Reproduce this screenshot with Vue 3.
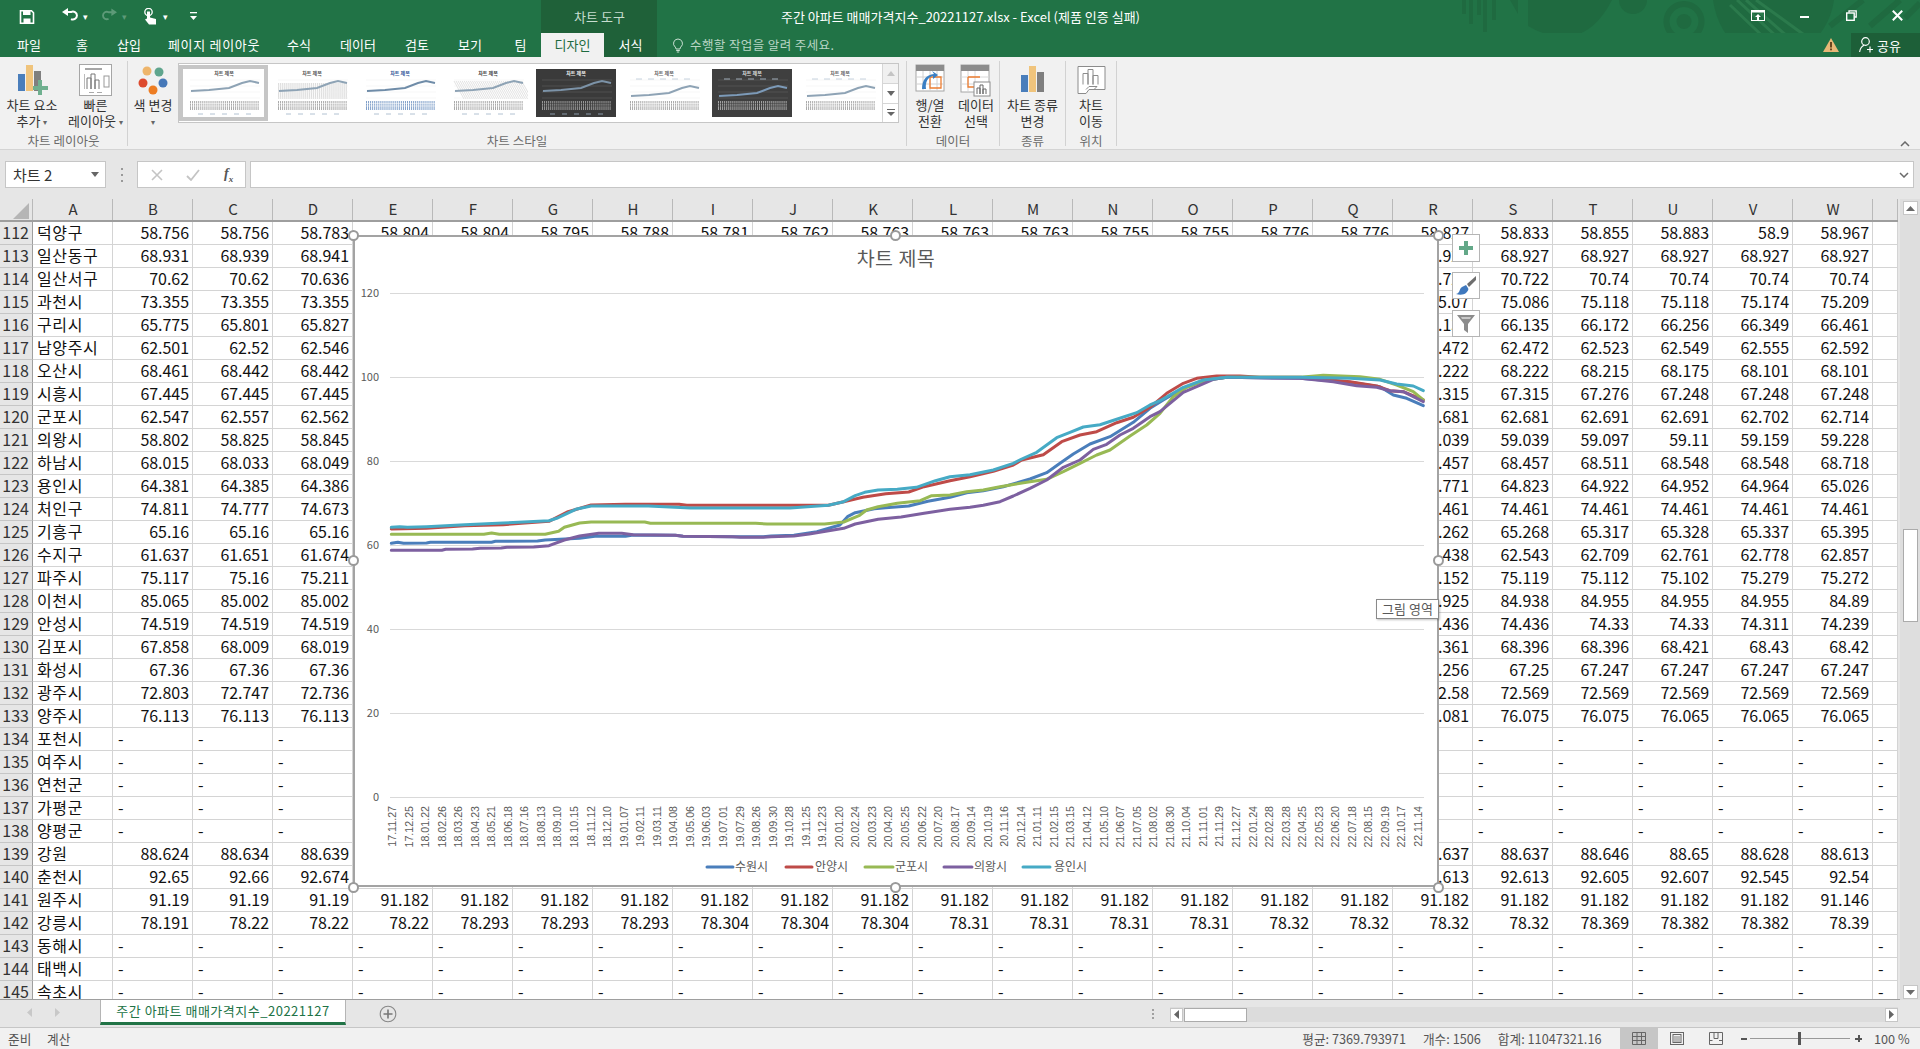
<script setup>
const D = [
  [112,'덕양구',['58.756','58.756','58.783','58.804','58.804','58.795','58.788','58.781','58.762','58.763','58.763','58.763','58.755','58.755','58.776','58.776','58.827','58.833','58.855','58.883','58.9','58.967']],
  [113,'일산동구',['68.931','68.939','68.941',14,'68.927','68.927','68.927','68.927','68.927','68.927']],
  [114,'일산서구',['70.62','70.62','70.636',14,'70.722','70.722','70.74','70.74','70.74','70.74']],
  [115,'과천시',['73.355','73.355','73.355',14,'75.07','75.086','75.118','75.118','75.174','75.209']],
  [116,'구리시',['65.775','65.801','65.827',14,'66.135','66.135','66.172','66.256','66.349','66.461']],
  [117,'남양주시',['62.501','62.52','62.546',14,'62.472','62.472','62.523','62.549','62.555','62.592']],
  [118,'오산시',['68.461','68.442','68.442',14,'68.222','68.222','68.215','68.175','68.101','68.101']],
  [119,'시흥시',['67.445','67.445','67.445',14,'67.315','67.315','67.276','67.248','67.248','67.248']],
  [120,'군포시',['62.547','62.557','62.562',14,'62.681','62.681','62.691','62.691','62.702','62.714']],
  [121,'의왕시',['58.802','58.825','58.845',14,'59.039','59.039','59.097','59.11','59.159','59.228']],
  [122,'하남시',['68.015','68.033','68.049',14,'68.457','68.457','68.511','68.548','68.548','68.718']],
  [123,'용인시',['64.381','64.385','64.386',14,'64.771','64.823','64.922','64.952','64.964','65.026']],
  [124,'처인구',['74.811','74.777','74.673',14,'74.461','74.461','74.461','74.461','74.461','74.461']],
  [125,'기흥구',['65.16','65.16','65.16',14,'65.262','65.268','65.317','65.328','65.337','65.395']],
  [126,'수지구',['61.637','61.651','61.674',14,'62.438','62.543','62.709','62.761','62.778','62.857']],
  [127,'파주시',['75.117','75.16','75.211',14,'75.152','75.119','75.112','75.102','75.279','75.272']],
  [128,'이천시',['85.065','85.002','85.002',14,'84.925','84.938','84.955','84.955','84.955','84.89']],
  [129,'안성시',['74.519','74.519','74.519',14,'74.436','74.436','74.33','74.33','74.311','74.239']],
  [130,'김포시',['67.858','68.009','68.019',14,'68.361','68.396','68.396','68.421','68.43','68.42']],
  [131,'화성시',['67.36','67.36','67.36',14,'67.256','67.25','67.247','67.247','67.247','67.247']],
  [132,'광주시',['72.803','72.747','72.736',14,'72.58','72.569','72.569','72.569','72.569','72.569']],
  [133,'양주시',['76.113','76.113','76.113',14,'76.081','76.075','76.075','76.065','76.065','76.065']],
  [134,'포천시'],[135,'여주시'],[136,'연천군'],[137,'가평군'],[138,'양평군'],
  [139,'강원',['88.624','88.634','88.639',14,'88.637','88.637','88.646','88.65','88.628','88.613']],
  [140,'춘천시',['92.65','92.66','92.674',14,'92.613','92.613','92.605','92.607','92.545','92.54']],
  [141,'원주시',['91.19','91.19','91.19','91.182','91.182','91.182','91.182','91.182','91.182','91.182','91.182','91.182','91.182','91.182','91.182','91.182','91.182','91.182','91.182','91.182','91.182','91.146']],
  [142,'강릉시',['78.191','78.22','78.22','78.22','78.293','78.293','78.293','78.304','78.304','78.304','78.31','78.31','78.31','78.31','78.32','78.32','78.32','78.32','78.369','78.382','78.382','78.39']],
  [143,'동해시'],[144,'태백시'],[145,'속초시'],
]
const cols = 'ABCDEFGHIJKLMNOPQRSTUVW'.split('').concat([''])
const rows = D.map(([n, name, vals]) => {
  let cells
  if (!vals) cells = Array.from({ length: 23 }, () => ({ t: '-', dash: true }))
  else {
    const out = []
    for (const v of vals) {
      if (typeof v === 'number') { for (let i = 0; i < 13; i++) out.push({ t: '' }) }
      else out.push({ t: v })
    }
    out.push({ t: '' })
    cells = out
  }
  return { n, name, cells }
})

const dates = '17.11.27 17.12.25 18.01.22 18.02.26 18.03.26 18.04.23 18.05.21 18.06.18 18.07.16 18.08.13 18.09.10 18.10.15 18.11.12 18.12.10 19.01.07 19.02.11 19.03.11 19.04.08 19.05.06 19.06.03 19.07.01 19.07.29 19.08.26 19.09.30 19.10.28 19.11.25 19.12.23 20.01.20 20.02.24 20.03.23 20.04.20 20.05.25 20.06.22 20.07.20 20.08.17 20.09.14 20.10.19 20.11.16 20.12.14 21.01.11 21.02.15 21.03.15 21.04.12 21.05.10 21.06.07 21.07.05 21.08.02 21.08.30 21.10.04 21.11.01 21.11.29 21.12.27 22.01.24 22.02.28 22.03.28 22.04.25 22.05.23 22.06.20 22.07.18 22.08.15 22.09.19 22.10.17 22.11.14'.split(' ')
const dateLabels = dates.map((t, i) => ({ t, x: 396 + i * (1026 / 62) }))
const yAxis = [120, 100, 80, 60, 40, 20, 0].map((v) => ({ v, y: 797 - v * 4.2 }))

// first list: crop measured at x 350 + zx/2.613, second list: x 950 + zx/3; y 350 + zy/3
const mk = (color, a, b) => {
  const p = a.map(([x, y]) => [350 + x / 2.613, 350 + y / 3]).concat(b.map(([x, y]) => [950 + x / 3, 350 + y / 3]))
  return { color, pts: p.map(([x, y]) => x.toFixed(1) + ',' + y.toFixed(1)).join(' ') }
}
const series = [
  mk('#4a7ebb',
    [[108,580],[125,577],[140,580],[200,579],[210,577],[370,577],[380,574],[490,573],[510,570],[600,565],[640,559],[720,559],[740,555],[850,556],[870,559],[1000,560],[1080,560],[1100,558],[1160,556],[1220,545],[1280,525],[1300,500],[1320,488],[1370,476],[1400,473],[1460,468],[1510,454]],
    [[0,442],[50,428],[100,422],[160,410],[240,387],[290,368],[330,340],[370,312],[420,282],[480,260],[550,217],[600,175],[640,150],[700,115],[760,92],[830,82],[1050,85],[1200,97],[1290,110],[1330,135],[1370,145],[1420,167]]),
  mk('#be4b48',
    [[108,537],[200,535],[300,527],[400,524],[520,514],[570,485],[630,465],[720,463],[860,463],[880,466],[1250,466],[1290,455],[1340,442],[1400,431],[1460,426],[1500,410]],
    [[0,392],[60,380],[130,364],[190,345],[215,330],[280,314],[335,275],[390,255],[440,245],[500,218],[550,202],[600,172],[650,130],[700,100],[740,85],[800,78],[870,78],[930,82],[1050,82],[1200,95],[1280,108],[1320,122],[1360,125],[1420,150]]),
  mk('#98b954',
    [[108,553],[350,553],[370,549],[390,553],[510,553],[545,544],[560,532],[600,519],[630,516],[770,516],[785,520],[1060,520],[1090,522],[1240,522],[1290,516],[1330,497],[1350,480],[1380,470],[1430,460],[1490,452],[1520,437]],
    [[0,435],[50,425],[100,420],[150,410],[230,397],[290,388],[340,365],[390,340],[440,315],[480,300],[540,258],[590,225],[630,190],[670,140],[710,112],[770,90],[830,82],[1050,82],[1120,76],[1230,80],[1290,88],[1340,105],[1390,125],[1420,150]]),
  mk('#7d60a0',
    [[108,601],[240,601],[250,598],[320,597],[340,595],[395,594],[410,592],[480,591],[520,587],[560,570],[600,558],[650,550],[710,550],[740,554],[850,556],[870,559],[1000,560],[1020,562],[1080,562],[1100,560],[1160,558],[1200,552],[1290,535],[1320,522],[1380,508],[1440,501],[1500,490]],
    [[0,478],[60,472],[100,466],[150,455],[190,438],[240,415],[290,390],[340,352],[390,330],[430,298],[470,283],[510,255],[550,235],[600,200],[630,185],[700,127],[740,110],[790,88],[830,82],[1050,85],[1150,95],[1220,107],[1280,112],[1320,122],[1360,125],[1420,155]]),
  mk('#46aac5',
    [[108,532],[130,530],[150,532],[200,530],[300,524],[400,519],[520,512],[540,505],[590,478],[630,468],[780,468],[890,474],[1150,474],[1250,466],[1290,455],[1320,437],[1345,427],[1380,420],[1430,418],[1480,412],[1530,392]],
    [[0,380],[60,374],[130,360],[190,340],[215,327],[260,307],[320,263],[360,247],[400,231],[450,224],[500,208],[560,188],[600,165],[630,152],[700,112],[760,90],[830,82],[1050,82],[1200,85],[1290,90],[1340,102],[1390,108],[1420,122]]),
]
const legend = [
  { name: '수원시', color: '#4a7ebb', x1: 707, x2: 733, tx: 735 },
  { name: '안양시', color: '#be4b48', x1: 786, x2: 812, tx: 815 },
  { name: '군포시', color: '#98b954', x1: 865, x2: 893, tx: 895 },
  { name: '의왕시', color: '#7d60a0', x1: 944, x2: 972, tx: 974 },
  { name: '용인시', color: '#46aac5', x1: 1023, x2: 1050, tx: 1054 },
]
const handles = [[353,235],[895,235],[1438,235],[353,560],[1438,560],[353,887],[895,887],[1438,887]]

const tabs = [
  { t: '파일', w: 58 }, { t: '홈', w: 48 }, { t: '삽입', w: 46 }, { t: '페이지 레이아웃', w: 124, wide: true },
  { t: '수식', w: 46 }, { t: '데이터', w: 72 }, { t: '검토', w: 46 }, { t: '보기', w: 60 }, { t: '팀', w: 41 },
]
const thumbs = [
  { bg: '#fff', title: '#555', tick: '#aaa', line: '#8ea3b5', kind: 'plain', sel: true },
  { bg: '#fff', title: '#555', tick: '#aaa', line: '#8ea3b5', kind: 'bars' },
  { bg: '#fff', title: '#2f5597', tick: '#7f9fc9', line: '#6f8ca8', kind: 'plain' },
  { bg: '#fff', title: '#444', tick: '#aaa', line: '#8ea3b5', kind: 'hatch' },
  { bg: '#3a3a3a', title: '#eee', tick: '#999', line: '#7c93a8', kind: 'plain' },
  { bg: '#fff', title: '#666', tick: '#aaa', line: '#8ea3b5', kind: 'top' },
  { bg: '#3f3f3f', title: '#ddd', tick: '#a8a8a8', line: '#7c9ab8', kind: 'top' },
  { bg: '#fff', title: '#666', tick: '#aaa', line: '#8ea3b5', kind: 'top' },
]
const thumbTicks = Array.from({ length: 34 }, (_, i) => 6 + i * 2.05)
</script>

<template>
  <div class="app">
    <header class="titlebar">
      <svg class="pattern" viewBox="0 0 520 57" width="520" height="57">
        <g fill="#1f6a40">
          <rect x="62" y="0" width="4" height="14"/><rect x="69" y="0" width="4" height="24"/><rect x="77" y="0" width="4" height="15"/><rect x="83" y="0" width="4" height="32"/><rect x="92" y="0" width="4" height="20"/>
          <path d="M110 0 L118 14 L118 0Z"/>
          <path d="M128 0 L128 26 Q150 39 170 36 Q195 33 212 0Z"/>
          <circle cx="233" cy="0" r="14"/>
          <path fill-rule="evenodd" d="M284 1a20.500 20.500 0 1 0 .01 0ZM284 7a14.500 14.500 0 1 1-.01 0Z"/>
          <circle cx="284" cy="21.500" r="7.500"/>
          <path d="M313 0 Q318 34 344 52 L402 52 Q430 30 434 0Z"/>
        </g>
        <g stroke="#2b7a4c" stroke-width="3" fill="none">
          <path d="M330 5 L375 48M337 0 L389 48M346 0 L396 44M356 0 L407 37"/>
          <path d="M430 26 L463 0M470 26 L500 0M505 18 L520 3" stroke="#1f6a40" stroke-width="6"/>
        </g>
      </svg>
      <div class="qat">
        <svg class="q-save" width="16" height="14" viewBox="0 0 16 14"><path d="M1.500 .8h11l2 2v10.400h-13Z" fill="none" stroke="#fff" stroke-width="1.600"/><rect x="4" y="1" width="7.500" height="4" fill="#fff"/><rect x="4.500" y="8.500" width="7" height="4.500" fill="#fff"/></svg>
        <svg class="q-undo" width="16" height="15" viewBox="0 0 16 15"><path d="M5 7h5a4 4 0 1 1 0 7" fill="none" stroke="#fff" stroke-width="2" transform="translate(-1 -3)"/><path d="M6 0v8L0 4Z" fill="#fff" transform="translate(0 0)"/></svg>
        <span class="q-drop">▾</span>
        <svg class="q-redo" width="15" height="15" viewBox="0 0 16 15"><g transform="matrix(-1 0 0 1 16 0)"><path d="M5 7h5a4 4 0 1 1 0 7" fill="none" stroke="#5d9a78" stroke-width="2" transform="translate(-1 -3)"/><path d="M6 0v8L0 4Z" fill="#5d9a78"/></g></svg>
        <span class="q-drop dim">▾</span>
        <svg class="q-touch" width="14" height="17" viewBox="0 0 14 17"><circle cx="4.500" cy="4" r="3.700" fill="none" stroke="#fff" stroke-width="1.300"/><path d="M3 3.500h3v6l6 1.500v5.500H5L1 11.500l2-1Z" fill="#fff"/></svg>
        <span class="q-drop">▾</span>
        <svg class="q-more" width="7" height="9" viewBox="0 0 7 9"><rect x="0" y="0" width="7" height="1.300" fill="#fff"/><path d="M0 4h7L3.500 8Z" fill="#fff"/></svg>
      </div>
      <div class="tool-band">차트 도구</div>
      <div class="doc-title">주간 아파트 매매가격지수_20221127.xlsx - Excel (제품 인증 실패)</div>
      <div class="win">
        <svg class="w-opt" width="14" height="11" viewBox="0 0 14 11"><rect x=".5" y=".5" width="13" height="10" fill="none" stroke="#fff"/><rect x=".5" y=".5" width="13" height="2" fill="#fff"/><path d="M7 4l3 3H8v3H6V7H4Z" fill="#fff"/></svg>
        <span class="w-min"></span>
        <svg class="w-res" width="11" height="11" viewBox="0 0 11 11"><path d="M3 2.500V.8h7.200V7H8.500" fill="none" stroke="#fff" stroke-width="1.300"/><rect x=".7" y="3" width="7.500" height="7.300" fill="none" stroke="#fff" stroke-width="1.400"/></svg>
        <svg class="w-close" width="11" height="11" viewBox="0 0 11 11"><path d="M.8 .8L10.200 10.200M10.200 .8L.8 10.200" stroke="#fff" stroke-width="2"/></svg>
      </div>
    </header>

    <nav class="tabs">
      <span v-for="t in tabs" :key="t.t" class="tab" :class="{ wide: t.wide }" :style="{ width: t.w + 'px' }">{{ t.t }}</span>
      <span class="tab ctx active">디자인</span>
      <span class="tab ctx">서식</span>
      <svg class="bulb" width="12" height="15" viewBox="0 0 12 15"><path d="M6 1a4.500 4.500 0 0 0-2.800 8c.6.600.8 1.200.8 2h4c0-.8.2-1.400.8-2A4.500 4.500 0 0 0 6 1Z" fill="none" stroke="#c9e0d2" stroke-width="1"/><path d="M4.200 12.500h3.600M4.800 14h2.400" stroke="#c9e0d2" stroke-width="1"/></svg>
      <span class="tell">수행할 작업을 알려 주세요.</span>
      <svg class="warn" width="16" height="14" viewBox="0 0 16 14"><path d="M8 0L16 14H0Z" fill="#e8b877"/><rect x="7.100" y="4" width="1.800" height="5.500" fill="#5b3a16"/><rect x="7.100" y="10.500" width="1.800" height="1.800" fill="#5b3a16"/></svg>
      <span class="share">
        <svg width="15" height="16" viewBox="0 0 15 16"><circle cx="6.500" cy="4.500" r="3.800" fill="none" stroke="#fff" stroke-width="1.200"/><path d="M.6 15c.5-3.500 2.500-6 4.500-6.800" fill="none" stroke="#fff" stroke-width="1.200"/><path d="M11 9.500v6M8 12.500h6" stroke="#fff" stroke-width="1.200"/></svg>
        공유
      </span>
    </nav>

    <section class="ribbon">
      <div class="group g1">
        <div class="g-body">
          <div class="rbtn w64">
            <svg class="ic" width="32" height="32" viewBox="0 0 32 32"><rect x="2" y="10" width="7" height="17" fill="#4a7ebb"/><rect x="10" y="1" width="7" height="26" fill="#f0c47c"/><rect x="18" y="7" width="7" height="20" fill="#7f7f7f"/><path d="M22 16h4v6h6v4h-6v5h-4v-5h-5v-4h5Z" fill="#6fb08f"/></svg>
            <span class="l1">차트 요소</span><span class="l2">추가<i class="car">▾</i></span>
          </div>
          <div class="rbtn w62">
            <svg class="ic" width="33" height="32" viewBox="0 0 33 32"><rect x=".5" y=".5" width="32" height="31" fill="#fff" stroke="#a6a6a6"/><rect x="6" y="4" width="17" height="2" fill="#a6a6a6"/><rect x="5" y="10" width="1" height="15" fill="#bbb"/><path d="M8 25V14h4v11M12 25V10h4v15M16 25V16h4v9" fill="#fff" stroke="#777"/><rect x="25" y="12" width="5" height="11" fill="#fff" stroke="#999"/><rect x="10" y="28" width="5" height="1" fill="#aaa"/><rect x="18" y="28" width="5" height="1" fill="#aaa"/></svg>
            <span class="l1">빠른</span><span class="l2">레이아웃<i class="car">▾</i></span>
          </div>
        </div>
        <div class="g-label">차트 레이아웃</div>
      </div>
      <div class="group g2">
        <div class="g-body">
          <div class="rbtn w50">
            <svg class="ic" width="32" height="32" viewBox="0 0 32 32"><circle cx="10" cy="7" r="4.500" fill="#eeb56b"/><circle cx="22" cy="8" r="4.500" fill="#5fa58d"/><circle cx="6" cy="19" r="4.500" fill="#dd4a2e"/><circle cx="26" cy="19" r="4.500" fill="#4678b8"/><circle cx="16" cy="26" r="4.500" fill="#ed7d23"/></svg>
            <span class="l1">색 변경</span><span class="l2"><i class="car solo">▾</i></span>
          </div>
          <div class="gallery">
            <div v-for="(th, i) in thumbs" :key="i" class="thumb" :class="{ sel: th.sel }">
              <svg width="80" height="48" viewBox="0 0 80 48">
                <rect width="80" height="48" :fill="th.bg"/>
                <g v-if="th.kind === 'bars'"><rect v-for="x in thumbTicks" :key="x" :x="x" y="14" width="1.200" height="16" fill="#dedede"/></g>
                <g v-if="th.kind === 'hatch'" stroke="#cfcfcf" stroke-width=".6"><path v-for="x in thumbTicks" :key="x" :d="`M${x} 12L${x + 10} 30`"/></g>
                <g :stroke="th.bg === '#fff' ? '#ececec' : '#666'" stroke-width=".5"><path d="M6 11H76M6 17H76M6 23H76M6 29H76"/></g>
                <text x="40" y="6" class="t-title" :fill="th.title" text-anchor="middle">차트 제목</text>
                <g v-if="th.kind === 'top'" stroke="#b8c6d6" stroke-width=".8"><path d="M12 10h6M24 10h6M36 10h6M48 10h6M60 10h6"/></g>
                <polyline :points="th.kind === 'top' ? '7,27 25,26 45,24 58,19 66,17 75,19' : '7,22 25,21 45,19 58,14 66,12 75,14'" fill="none" :stroke="th.line" stroke-width="2"/>
                <g><rect v-for="x in thumbTicks" :key="x" :x="x" y="32" width="1" height="9" :fill="th.tick"/></g>
                <g :stroke="th.bg === '#fff' ? '#fff' : th.bg" stroke-width=".5"><path d="M5 34.500H76M5 37H76"/></g>
                <g v-if="th.kind !== 'top'" stroke="#9fb2c6" stroke-width=".8"><path d="M14 45h5M26 45h5M38 45h5M50 45h5M62 45h5"/></g>
              </svg>
            </div>
            <div class="g-scroll">
              <span class="gs up"><svg width="8" height="5" viewBox="0 0 8 5"><path d="M4 0l4 5H0Z" fill="#c4c4c4"/></svg></span>
              <span class="gs"><svg width="8" height="5" viewBox="0 0 8 5"><path d="M4 5l4-5H0Z" fill="#666"/></svg></span>
              <span class="gs"><svg width="8" height="8" viewBox="0 0 8 8"><rect width="8" height="1" fill="#666"/><path d="M4 7l4-4H0Z" fill="#666"/></svg></span>
            </div>
          </div>
        </div>
        <div class="g-label">차트 스타일</div>
      </div>
      <div class="group g3">
        <div class="g-body">
          <div class="rbtn w46">
            <svg class="ic" width="30" height="32" viewBox="0 0 30 32"><rect x="1" y="1" width="28" height="26" fill="#fff" stroke="#a6a6a6"/><rect x="1" y="1" width="28" height="6" fill="#8c8c8c"/><path d="M1 13h28M1 20h28M8 7v20M15 7v20M22 7v20" stroke="#d0d0d0"/><path d="M15 13h11v11H15Z" fill="none" stroke="#ed7d31" stroke-width="1.300"/><path d="M7 25C7 16 11 11 19 10l-2-3 6 4-5 4 0-3C13 13 10 18 11 25Z" fill="#3a7fc4"/></svg>
            <span class="l1">행/열</span><span class="l2">전환</span>
          </div>
          <div class="rbtn w46">
            <svg class="ic" width="32" height="32" viewBox="0 0 32 32"><rect x="1" y="1" width="28" height="27" fill="#fff" stroke="#a6a6a6"/><rect x="1" y="1" width="28" height="6" fill="#8c8c8c"/><path d="M1 13h28M1 20h28M8 7v20M15 7v20" stroke="#d8d8d8"/><path d="M8 13h12M8 13v10h8" fill="none" stroke="#ed7d31" stroke-width="1.300"/><rect x="14" y="18" width="16" height="14" fill="#fff" stroke="#8c8c8c"/><path d="M17 30v-6h3v6M20 30V21h3v9M23 30v-5h3v5" fill="#fff" stroke="#666"/></svg>
            <span class="l1">데이터</span><span class="l2">선택</span>
          </div>
        </div>
        <div class="g-label">데이터</div>
      </div>
      <div class="group g4">
        <div class="g-body">
          <div class="rbtn w66">
            <svg class="ic" width="24" height="28" viewBox="0 0 24 28"><rect x="0" y="9" width="7" height="17" fill="#4a7ebb"/><rect x="8" y="0" width="7" height="26" fill="#f0c47c"/><rect x="16" y="6" width="7" height="20" fill="#7f7f7f"/></svg>
            <span class="l1">차트 종류</span><span class="l2">변경</span>
          </div>
        </div>
        <div class="g-label">종류</div>
      </div>
      <div class="group g5">
        <div class="g-body">
          <div class="rbtn w50">
            <svg class="ic" width="29" height="29" viewBox="0 0 29 29"><path d="M1 1h27v23H12l-3 4H1Z" fill="#fff" stroke="#8c8c8c"/><path d="M9 24l3-3h8l-3 3" fill="none" stroke="#8c8c8c"/><path d="M6 19V8h5v11M11 19V4h5v15M16 19V10h5v9" fill="#fff" stroke="#8c8c8c"/></svg>
            <span class="l1">차트</span><span class="l2">이동</span>
          </div>
        </div>
        <div class="g-label">위치</div>
      </div>
      <svg class="collapse" width="10" height="6" viewBox="0 0 10 6"><path d="M1 5l4-4 4 4" fill="none" stroke="#6a6a6a" stroke-width="1.500"/></svg>
    </section>

    <section class="fbar">
      <div class="namebox"><span>차트 2</span><svg width="8" height="5" viewBox="0 0 8 5"><path d="M0 0h8L4 5Z" fill="#666"/></svg></div>
      <div class="fdots"><i></i><i></i><i></i></div>
      <div class="fbtns">
        <svg width="12" height="12" viewBox="0 0 12 12"><path d="M1 1l10 10M11 1L1 11" stroke="#c4c4c4" stroke-width="1.600"/></svg>
        <svg width="14" height="12" viewBox="0 0 14 12"><path d="M1 7l4 4 8-10" fill="none" stroke="#c4c4c4" stroke-width="1.800"/></svg>
        <span class="fx">f<sub>x</sub></span>
      </div>
      <div class="finput"><svg width="10" height="6" viewBox="0 0 10 6"><path d="M1 1l4 4 4-4" fill="none" stroke="#6a6a6a" stroke-width="1.500"/></svg></div>
    </section>

    <section class="sheet-wrap">
      <div class="sheet">
        <div class="head">
          <div class="corner"><svg width="16" height="16" viewBox="0 0 16 16"><path d="M16 0v16H0Z" fill="#b5b5b5"/></svg></div>
          <div v-for="c in cols" :key="c" class="hcell">{{ c }}</div>
        </div>
        <div v-for="r in rows" :key="r.n" class="row">
          <div class="rn">{{ r.n }}</div>
          <div class="cell name">{{ r.name }}</div>
          <div v-for="(c, i) in r.cells" :key="i" class="cell" :class="{ dash: c.dash }">{{ c.t }}</div>
        </div>

        <div class="chart">
          <svg class="chart-svg" width="1086" height="652" viewBox="353 235 1086 652">
            <text x="896" y="266" class="c-title" text-anchor="middle">차트 제목</text>
            <g v-for="y in yAxis" :key="y.v">
              <line x1="390" x2="1424" :y1="y.y + .5" :y2="y.y + .5" stroke="#d9d9d9" stroke-width="1"/>
              <text x="379" :y="y.y + 4" class="c-axis" text-anchor="end">{{ y.v }}</text>
            </g>
            <polyline v-for="s in series" :key="s.color" :points="s.pts" fill="none" :stroke="s.color" stroke-width="3" stroke-linejoin="round" stroke-linecap="round"/>
            <text v-for="d in dateLabels" :key="d.t" :x="d.x" y="806" :transform="`rotate(-90 ${d.x} 806)`" class="c-date" text-anchor="end">{{ d.t }}</text>
            <g v-for="l in legend" :key="l.name">
              <line :x1="l.x1" :x2="l.x2" y1="867" y2="867" :stroke="l.color" stroke-width="3" stroke-linecap="round"/>
              <text :x="l.tx" y="871" class="c-leg">{{ l.name }}</text>
            </g>
          </svg>
          <i v-for="(h, i) in handles" :key="i" class="handle" :style="{ left: (h[0] - 353) + 'px', top: (h[1] - 235) + 'px' }"></i>
        </div>

        <div class="cbtn b1"><svg width="16" height="16" viewBox="0 0 16 16"><path d="M6 1h4v5h5v4h-5v5H6v-5H1V6h5Z" fill="#63a888"/></svg></div>
        <div class="cbtn b2"><svg width="22" height="22" viewBox="0 0 22 22"><path d="M21 1L12 9l2 3 7-7Z" fill="#6e6e6e"/><path d="M11 10l-4 2c-2 1-2 3-3 5-1 1-2 2-3 2 3 1 8 1 10-1 2-2 3-4 2-5Z" fill="#3f78bd"/></svg></div>
        <div class="cbtn b3"><svg width="20" height="20" viewBox="0 0 20 20"><path d="M1 1h18l-7 9v9l-4-3v-6Z" fill="#8c8c8c"/><path d="M5 3h10l-1 2H6Z" fill="#c8c8c8"/></svg></div>
        <div class="tip">그림 영역</div>
      </div>
      <aside class="vscroll">
        <span class="vbtn"><svg width="9" height="5" viewBox="0 0 9 5"><path d="M4.500 0L9 5H0Z" fill="#6a6a6a"/></svg></span>
        <span class="vthumb"></span>
        <span class="vbtn last"><svg width="9" height="5" viewBox="0 0 9 5"><path d="M4.500 5L9 0H0Z" fill="#6a6a6a"/></svg></span>
      </aside>
    </section>

    <section class="sheetbar">
      <div class="nav"><svg width="5" height="9" viewBox="0 0 5 9"><path d="M5 0v9L0 4.500Z" fill="#c8c8c8"/></svg><svg width="5" height="9" viewBox="0 0 5 9"><path d="M0 0v9l5-4.500Z" fill="#c8c8c8"/></svg></div>
      <div class="stab">주간 아파트 매매가격지수_20221127</div>
      <svg class="addtab" width="18" height="18" viewBox="0 0 18 18"><circle cx="9" cy="9" r="7.800" fill="none" stroke="#888" stroke-width="1.100"/><path d="M9 4.500v9M4.500 9h9" stroke="#777" stroke-width="1.600"/></svg>
      <div class="split"><i></i><i></i><i></i></div>
      <div class="hscroll">
        <span class="hbtn"><svg width="5" height="9" viewBox="0 0 5 9"><path d="M5 0v9L0 4.500Z" fill="#666"/></svg></span>
        <span class="hthumb"></span>
        <span class="hbtn end"><svg width="5" height="9" viewBox="0 0 5 9"><path d="M0 0v9l5-4.500Z" fill="#666"/></svg></span>
      </div>
    </section>

    <footer class="status">
      <span class="st1">준비</span>
      <span class="st2">계산</span>
      <span class="st3">평균: 7369.793971</span>
      <span class="st4">개수: 1506</span>
      <span class="st5">합계: 11047321.16</span>
      <span class="view on"><svg width="14" height="13" viewBox="0 0 14 13"><path d="M.5 .5h13v12H.5ZM.5 4.500h13M.5 8.500h13M5 .5v12M9.500 .5v12" fill="none" stroke="#666"/></svg></span>
      <span class="view"><svg width="14" height="13" viewBox="0 0 14 13"><rect x=".5" y=".5" width="13" height="12" fill="none" stroke="#666"/><rect x="3" y="2.500" width="8" height="8" fill="none" stroke="#666"/><path d="M4 5h6M4 7h6M4 9h6" stroke="#666" stroke-width=".8"/></svg></span>
      <span class="view"><svg width="14" height="13" viewBox="0 0 14 13"><path d="M.5 .5h13v12H.5ZM5 .5v6h4v-6M.5 8.500h3M10 8.500h3.500" fill="none" stroke="#666"/></svg></span>
      <div class="zoom">
        <i class="zm"></i>
        <span class="ztrack"><i class="zthumb"></i></span>
        <i class="zp"></i>
        <span class="zval">100 %</span>
      </div>
    </footer>
  </div>
</template>

<style>
html, body { margin: 0; padding: 0; overflow: hidden; background: #fff; }
</style>

<style scoped>
.app {
  width: 1920px; height: 1049px; overflow: hidden; display: flex; flex-direction: column;
  font-family: "Noto Sans CJK KR", "Noto Sans", sans-serif; color: #333; position: relative;
}
i { display: block; font-style: normal; }
.titlebar { height: 33px; background: #217346; display: flex; align-items: center; position: relative; color: #fff; flex: none; }
.pattern { position: absolute; left: 1400px; top: 0; }
.qat { width: 541px; display: flex; align-items: center; flex: none; height: 33px; position: relative; }
.qat svg, .qat span { flex: none; }
.q-save { margin-left: 19px; }
.q-undo { margin-left: 27px; margin-top: -2px; }
.q-drop { font-size: 9px; color: #fff; margin-left: 5px; line-height: 1; }
.q-drop.dim { color: #5d9a78; }
.q-redo { margin-left: 14px; margin-top: -2px; }
.q-touch { margin-left: 17px; }
.q-more { margin-left: 22px; }
.tool-band { width: 116px; height: 33px; background: #1f6139; color: #c7ddd0; font-size: 13px; display: flex; align-items: center; justify-content: center; flex: none; position: relative; padding-left: 1px; box-sizing: border-box; }
.doc-title { margin-left: 124px; font-size: 13px; color: #fff; white-space: nowrap; position: relative; }
.win { position: absolute; left: 1750px; top: 0; height: 33px; width: 170px; }
.w-opt { position: absolute; left: 1px; top: 10px; }
.w-min { position: absolute; left: 50px; top: 16px; width: 9px; height: 2px; background: #fff; }
.w-res { position: absolute; left: 96px; top: 10px; }
.w-close { position: absolute; left: 142px; top: 10px; }

.tabs { height: 24px; background: #217346; display: flex; align-items: center; flex: none; position: relative; color: #fff; }
.tab { font-size: 13px; height: 24px; display: flex; align-items: center; justify-content: center; flex: none; white-space: nowrap; padding-bottom: 2px; box-sizing: border-box; }
.tab.wide { letter-spacing: .7px; }
.tab.ctx { width: 53px; background: #1f6139; }
.tab.active { width: 63px; background: #f1f1f1; color: #1e6b40; }
.bulb { margin-left: 15px; flex: none; }
.tell { font-size: 12.500px; color: #b9d6c5; margin-left: 6px; letter-spacing: .4px; white-space: nowrap; margin-top: -2px; }
.warn { margin-left: auto; margin-right: 12px; flex: none; }
.share { width: 69px; height: 24px; background: #1d5f38; display: flex; align-items: center; font-size: 13px; gap: 3px; padding-left: 8px; box-sizing: border-box; flex: none; }

.ribbon { height: 93px; background: #f1f1f1; border-bottom: 1px solid #d4d4d4; display: flex; flex: none; position: relative; padding-top: 4px; box-sizing: border-box; }
.group { display: flex; flex-direction: column; height: 85px; border-right: 1px solid #d2d2d2; box-sizing: border-box; flex: none; align-items: stretch; }
.g1 { width: 128px; }
.g2 { width: 779px; }
.g3 { width: 93px; }
.g4 { width: 66px; }
.g5 { width: 51px; }
.g-body { height: 68px; display: flex; flex: none; }
.g-label { font-size: 12.500px; color: #6a6a6a; text-align: center; line-height: 16px; margin-top: 4px; flex: none; }
.rbtn { display: flex; flex-direction: column; align-items: center; flex: none; font-size: 13px; line-height: 16px; color: #333; }
.rbtn .ic { height: 34px; flex: none; margin-top: 2px; margin-bottom: 0; }
.w64 { width: 64px; }
.w62 { width: 63px; }
.w50 { width: 50px; }
.w46 { width: 46px; }
.w66 { width: 65px; }
.l1, .l2 { display: block; white-space: nowrap; height: 16px; }
.car { display: inline-block; font-size: 8px; color: #666; margin-left: 3px; vertical-align: 1px; }
.car.solo { margin-left: 0; }
.gallery { width: 721px; height: 60px; margin-top: 2px; background: #fff; border: 1px solid #c6c6c6; box-sizing: border-box; display: flex; position: relative; }
.thumb { width: 88px; height: 58px; flex: none; display: flex; align-items: center; justify-content: center; box-sizing: border-box; }
.thumb.sel { border: 4px solid #c6c6c6; width: 89px; height: 56px; margin-top: 1px; }
.t-title { font-size: 5px; font-weight: 700; font-family: "Noto Sans CJK KR", sans-serif; }
.g-scroll { position: absolute; right: 0; top: 0; width: 15px; height: 58px; display: flex; flex-direction: column; border-left: 1px solid #d6d6d6; }
.gs { height: 20px; display: flex; align-items: center; justify-content: center; border-top: 1px solid #d6d6d6; box-sizing: border-box; background: #fff; }
.gs.up { background: #f0f0f0; border-top: 0; }
.collapse { position: absolute; left: 1900px; top: 84px; }

.fbar { height: 49px; background: #e6e6e6; flex: none; display: flex; align-items: center; padding: 0 6px 0 5px; box-sizing: border-box; }
.namebox { width: 101px; height: 27px; background: #fff; border: 1px solid #c6c6c6; box-sizing: border-box; display: flex; align-items: center; justify-content: space-between; padding: 0 6px 0 7px; font-size: 15px; flex: none; color: #333; }
.fdots { width: 31px; display: flex; flex-direction: column; gap: 4px; align-items: center; flex: none; }
.fdots i { width: 2px; height: 2px; background: #999; }
.fbtns { width: 109px; height: 27px; background: #fff; border: 1px solid #c6c6c6; box-sizing: border-box; display: flex; align-items: center; flex: none; padding-left: 13px; gap: 23px; }
.fx { font-family: "Liberation Serif", serif; font-style: italic; font-size: 14px; color: #555; font-weight: bold; margin-left: 1px; }
.fx sub { font-size: 9px; }
.finput { flex: 1; height: 27px; margin-left: 4px; background: #fff; border: 1px solid #c6c6c6; box-sizing: border-box; display: flex; align-items: center; justify-content: flex-end; padding-right: 4px; }

.sheet-wrap { height: 801px; display: flex; flex: none; background: #e6e6e6; }
.sheet { width: 1900px; height: 801px; overflow: hidden; position: relative; flex: none; background: #e6e6e6; border-bottom: 1px solid #9e9e9e; box-sizing: border-box; }
.head { display: grid; grid-template-columns: 33px repeat(23, 80px) 25px; height: 23px; background: #e6e6e6; border-bottom: 2px solid #9e9e9e; box-sizing: border-box; width: 1898px; }
.corner { display: flex; justify-content: flex-end; align-items: flex-start; padding: 4px 3px 0 0; box-sizing: border-box; border-right: 1px solid #b9b9b9; }
.hcell { font-size: 15px; line-height: 19px; text-align: center; color: #333; border-right: 1px solid #b9b9b9; box-sizing: border-box; padding-left: 1px; }
.row { display: grid; grid-template-columns: 33px repeat(23, 80px) 25px; height: 23px; width: 1898px; background: #fff; box-sizing: border-box; border-right: 1px solid #9e9e9e; }
.rn { background: #e6e6e6; font-size: 16px; line-height: 20px; text-align: right; padding-right: 3px; box-sizing: border-box; border-right: 1px solid #9e9e9e; border-bottom: 1px solid #c6c6c6; color: #333; }
.cell { font-size: 16px; line-height: 20px; text-align: right; padding-right: 3px; box-sizing: border-box; border-right: 1px solid #d4d4d4; border-bottom: 1px solid #d4d4d4; color: #111; white-space: nowrap; letter-spacing: -.05px; }
.cell.name { text-align: left; padding-left: 4px; letter-spacing: .6px; }
.cell.dash { text-align: left; padding-left: 5px; padding-right: 0; }
.chart { position: absolute; left: 353px; top: 36px; width: 1086px; height: 652px; background: #fff; box-shadow: inset 0 0 0 2px #a3a3a3; }
.chart-svg { position: absolute; left: 0; top: 0; }
.c-title { font-size: 19.500px; fill: #595959; letter-spacing: .5px; font-family: "Noto Sans CJK KR", sans-serif; }
.c-axis { font-size: 11px; fill: #595959; font-family: "Noto Sans CJK KR", sans-serif; }
.c-date { font-size: 10.670px; fill: #595959; font-family: "Liberation Sans", sans-serif; }
.c-leg { font-size: 12px; fill: #595959; font-family: "Noto Sans CJK KR", sans-serif; }
.handle { position: absolute; width: 11px; height: 11px; margin: -5px 0 0 -5px; border-radius: 50%; background: #fff; border: 2px solid #9a9a9a; box-sizing: border-box; }
.cbtn { position: absolute; left: 1452px; width: 28px; background: #fff; border: 1px solid #b5b5b5; box-sizing: border-box; display: flex; align-items: center; justify-content: center; }
.b1 { top: 35px; height: 28px; }
.b2 { top: 73px; height: 27px; }
.b3 { top: 111px; height: 27px; }
.tip { position: absolute; left: 1376px; top: 400px; width: 63px; height: 20px; background: #fff; border: 1px solid #8a8a8a; box-sizing: border-box; font-size: 13px; line-height: 17px; text-align: center; color: #595959; box-shadow: 1px 1px 2px rgba(0,0,0,.25); white-space: nowrap; }
.vscroll { width: 20px; height: 801px; display: flex; flex-direction: column; align-items: center; padding-top: 2px; box-sizing: border-box; background: #dedede; position: relative; }
.vbtn { width: 15px; height: 14px; background: #fff; border: 1px solid #c6c6c6; box-sizing: border-box; display: flex; align-items: center; justify-content: center; flex: none; }
.vbtn.last { margin-top: auto; margin-bottom: 1px; }
.vthumb { width: 15px; height: 93px; margin-top: 314px; background: #fff; border: 1px solid #ababab; box-sizing: border-box; flex: none; }

.sheetbar { height: 28px; background: #e6e6e6; display: flex; align-items: flex-start; flex: none; border-bottom: 1px solid #c6c6c6; box-sizing: border-box; position: relative; }
.nav { width: 100px; height: 24px; display: flex; align-items: center; gap: 23px; padding-left: 27px; box-sizing: border-box; flex: none; }
.stab { width: 246px; height: 25px; background: #fff; border-bottom: 3px solid #217346; box-sizing: border-box; font-size: 13px; color: #217346; text-align: center; line-height: 22px; letter-spacing: .5px; flex: none; border-left: 1px solid #b5b5b5; border-right: 1px solid #b5b5b5; white-space: nowrap; }
.addtab { margin-left: 33px; margin-top: 5px; flex: none; }
.split { position: absolute; left: 1152px; top: 9px; display: flex; flex-direction: column; gap: 2px; }
.split i { width: 2px; height: 2px; background: #a0a0a0; }
.hscroll { position: absolute; left: 1170px; top: 7px; width: 728px; height: 15px; background: #dcdcdc; display: flex; align-items: center; }
.hbtn { width: 13px; height: 14px; background: #fff; border: 1px solid #c6c6c6; box-sizing: border-box; display: flex; align-items: center; justify-content: center; flex: none; }
.hbtn.end { margin-left: auto; }
.hthumb { width: 63px; height: 14px; margin-left: 1px; background: #fff; border: 1px solid #ababab; box-sizing: border-box; flex: none; }

.status { height: 21px; background: #f1f1f1; display: flex; align-items: center; font-size: 12.700px; color: #555; flex: none; position: relative; }
.st1 { margin-left: 8px; width: 39px; }
.st2 { width: 70px; }
.st3 { margin-left: auto; }
.st4 { margin-left: 17px; }
.st5 { margin-left: 17px; margin-right: 18px; }
.view { width: 38.500px; height: 21px; display: flex; align-items: center; justify-content: center; flex: none; }
.view.on { background: #c6c6c6; }
.zoom { width: 185px; display: flex; align-items: center; flex: none; padding-left: 6px; box-sizing: border-box; }
.zm { width: 6px; height: 2px; background: #555; flex: none; }
.ztrack { width: 100px; height: 1px; background: #999; margin: 0 5px 0 3px; position: relative; flex: none; }
.zthumb { position: absolute; left: 48px; top: -6px; width: 3px; height: 13px; background: #555; }
.zp { width: 7px; height: 7px; flex: none; background: linear-gradient(#555,#555) center/7px 2px no-repeat, linear-gradient(#555,#555) center/2px 7px no-repeat; }
.zval { margin-left: 12px; white-space: nowrap; }
</style>
